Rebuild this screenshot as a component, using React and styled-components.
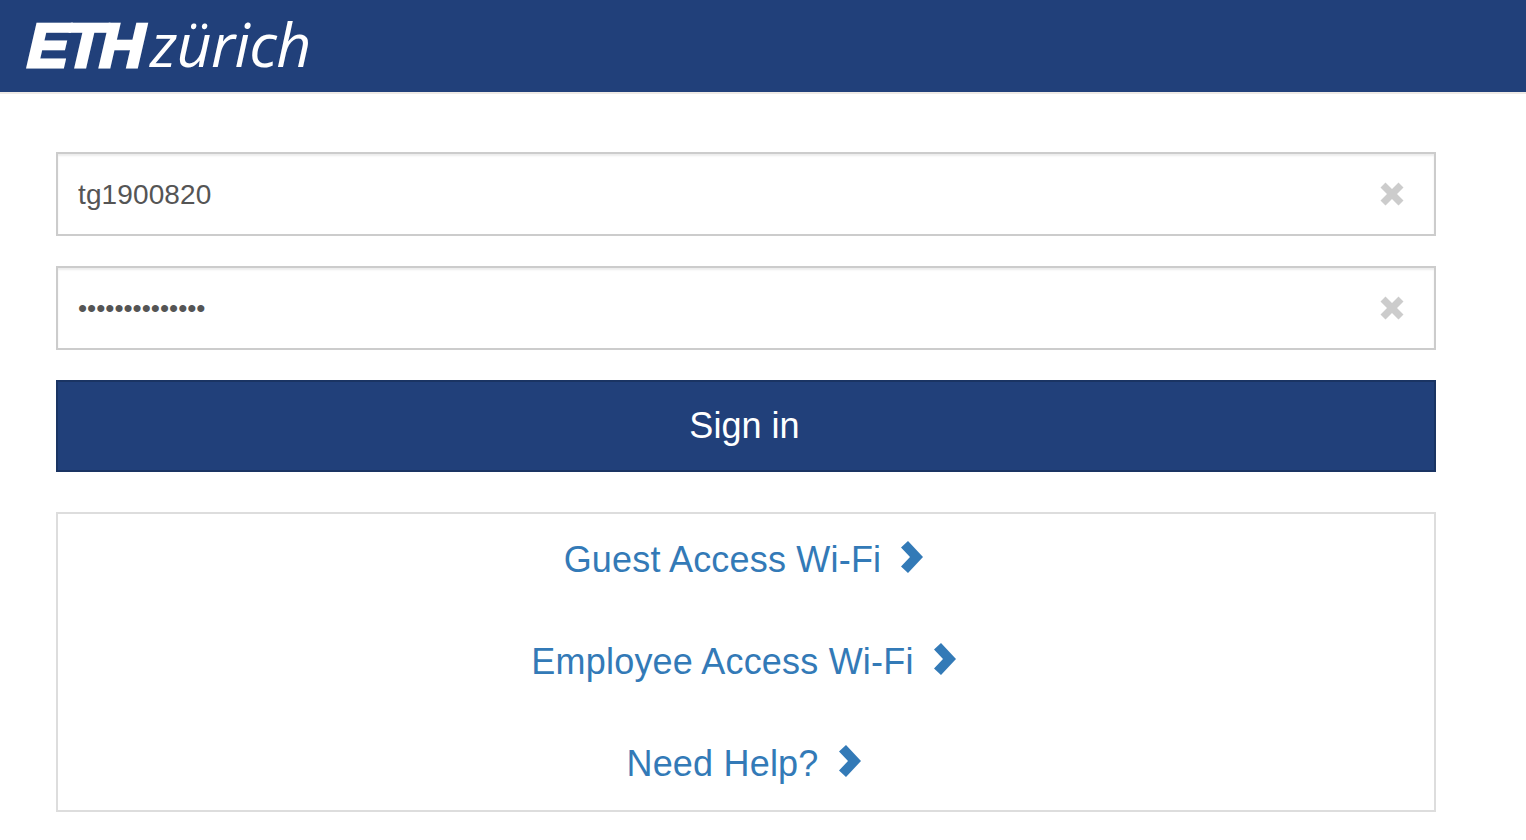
import React from "react";
import styled, { createGlobalStyle } from "styled-components";

const Global = createGlobalStyle`
  html, body { margin: 0; padding: 0; background: #fff; }
  body { font-family: "Liberation Sans", Arial, sans-serif; color: #555; }
  * { box-sizing: border-box; }
`;

const Header = styled.header`
  height: 94px;
  background: #21407a;
  border-bottom: 2px solid #eeeae6;
  padding: 20px 0 0 26px;
  display: flex;
  align-items: flex-start;
`;

const Logo = styled.div`
  display: flex;
  align-items: baseline;
  height: 48px;
  color: #fff;
  line-height: 48px;
`;

const LogoMark = styled.span`
  font-family: "Liberation Sans", Arial, sans-serif;
  font-weight: 700;
  font-size: 62px;
  letter-spacing: -3.5px;
  display: inline-block;
  transform: skewX(-13deg);
  transform-origin: left bottom;
  -webkit-text-stroke: 3px #fff;
  margin-left: -3px;
  width: 127px;
`;

const LogoWord = styled.span`
  font-family: "Open Sans", "DejaVu Sans", sans-serif;
  font-weight: 400;
  font-style: italic;
  font-size: 61px;
  letter-spacing: -0.6px;
  margin-left: 0;
`;

const Form = styled.main`
  width: 1380px;
  margin: 58px 0 0 56px;
  display: flex;
  flex-direction: column;
`;

const Field = styled.div`
  position: relative;
  flex: none;
  height: 84px;
  margin-bottom: 30px;
`;

const Input = styled.input`
  display: block;
  width: 100%;
  height: 100%;
  border: 2px solid #ccc;
  border-radius: 0;
  outline: none;
  background: #fff;
  padding: ${(p) => (p.type === "password" ? "0 60px 0 20px" : "2px 60px 0 20px")};
  font-family: "Liberation Sans", Arial, sans-serif;
  font-size: ${(p) => (p.type === "password" ? "26px" : "28px")};
  letter-spacing: ${(p) => (p.type === "password" ? "0" : "0.12px")};
  color: #555;
  box-shadow: inset 0 2px 2px rgba(0, 0, 0, 0.075);
`;

const Clear = styled.svg`
  position: absolute;
  top: 30px;
  right: 32px;
  width: 24px;
  height: 24px;
  fill: #ccc;
`;

const SignIn = styled.button`
  flex: none;
  height: 92px;
  width: 100%;
  margin-bottom: 40px;
  background: #21407a;
  border: 2px solid #1a3463;
  border-radius: 0;
  color: #fff;
  font-family: "Liberation Sans", Arial, sans-serif;
  font-size: 36px;
  letter-spacing: 0.03px;
  padding: 0 3px 0 0;
`;

const Panel = styled.nav`
  flex: none;
  height: 300px;
  border: 2px solid #ddd;
  padding: 21px 5px 0 0;
  display: flex;
  flex-direction: column;
  align-items: center;
`;

const LinkRow = styled.a`
  flex: none;
  height: 102px;
  display: flex;
  align-items: flex-start;
  gap: 20px;
  color: #337ab7;
  font-size: 36px;
  letter-spacing: 0.2px;
  line-height: 50px;
  text-decoration: none;
`;

const Chevron = styled.svg`
  width: 22px;
  height: 32px;
  margin-top: 6px;
  fill: #337ab7;
`;

const ClearIcon = () => (
  <Clear viewBox="0 0 24 24">
    <path d="M5.5 0.5 12 7 18.5 0.5 23.5 5.5 17 12 23.5 18.5 18.5 23.5 12 17 5.5 23.5 0.5 18.5 7 12 0.5 5.5Z" />
  </Clear>
);

const links = ["Guest Access Wi-Fi", "Employee Access Wi-Fi", "Need Help?"];

export default function App() {
  return (
    <>
      <Global />
      <Header>
        <Logo>
          <LogoMark>ETH</LogoMark>
          <LogoWord>zürich</LogoWord>
        </Logo>
      </Header>
      <Form>
        <Field>
          <Input type="text" defaultValue="tg1900820" />
          <ClearIcon />
        </Field>
        <Field>
          <Input type="password" defaultValue="abcdefghijklmn" />
          <ClearIcon />
        </Field>
        <SignIn>Sign in</SignIn>
        <Panel>
          {links.map((label) => (
            <LinkRow key={label} href="#">
              {label}
              <Chevron viewBox="0 0 22 32">
                <path d="M7 0 22 16 7 32 0 25.5 9 16 0 6.5Z" />
              </Chevron>
            </LinkRow>
          ))}
        </Panel>
      </Form>
    </>
  );
}
